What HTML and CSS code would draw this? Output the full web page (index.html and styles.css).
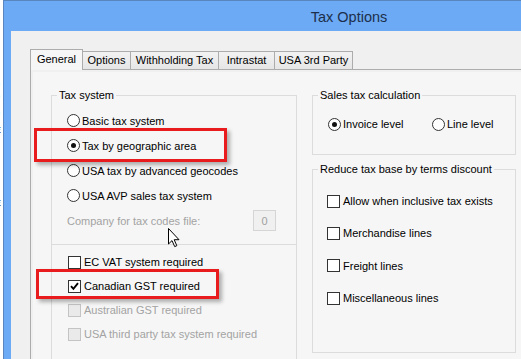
FILE: index.html
```html
<!DOCTYPE html>
<html>
<head>
<meta charset="utf-8">
<link rel="stylesheet" href="styles.css">
</head>
<body>
<div class="screen">
  <div class="behind">
    <span class="frag f1">n</span>
    <span class="frag f2">x</span>
    <span class="frag f3 link">x</span>
    <span class="frag f4">o</span>
    <span class="frag f5">o</span>
    <span class="frag f6">o</span>
    <span class="frag f7">E</span>
    <span class="frag f8">E</span>
  </div>
  <div class="window">
    <div class="titlebar">Tax Options</div>
    <div class="client">
      <div class="tabs">
        <div class="tab tab-general active">General</div>
        <div class="tab tab-options">Options</div>
        <div class="tab tab-withholding">Withholding Tax</div>
        <div class="tab tab-intrastat">Intrastat</div>
        <div class="tab tab-usa">USA 3rd Party</div>
      </div>
      <div class="tabpanel">
        <div class="page">
          <fieldset class="group group-taxsystem">
            <legend>Tax system</legend>
            <div class="section section-radios">
              <div class="opt"><span class="radio"></span>Basic tax system</div>
              <div class="opt"><span class="radio on"></span>Tax by geographic area</div>
              <div class="opt"><span class="radio"></span>USA tax by advanced geocodes</div>
              <div class="opt"><span class="radio"></span>USA AVP sales tax system</div>
              <div class="opt opt-company disabled"><span>Company for tax codes file:</span><span class="numbox">0</span></div>
            </div>
            <div class="section section-checks">
              <div class="opt"><span class="check"></span>EC VAT system required</div>
              <div class="opt"><span class="check on"><svg viewBox="0 0 11 11" width="11" height="11"><path d="M2 5.2 L4.4 7.8 L9 2.2" fill="none" stroke="#000" stroke-width="1.9"/></svg></span>Canadian GST required</div>
              <div class="opt disabled"><span class="check"></span>Australian GST required</div>
              <div class="opt disabled"><span class="check"></span>USA third party tax system required</div>
            </div>
          </fieldset>
          <div class="rightcol">
            <fieldset class="group group-calc">
              <legend>Sales tax calculation</legend>
              <div class="calc-row">
                <div class="opt opt-invoice"><span class="radio on"></span>Invoice level</div>
                <div class="opt"><span class="radio"></span>Line level</div>
              </div>
            </fieldset>
            <fieldset class="group group-reduce">
              <legend>Reduce tax base by terms discount</legend>
              <div class="reduce-list">
                <div class="opt"><span class="check"></span>Allow when inclusive tax exists</div>
                <div class="opt"><span class="check"></span>Merchandise lines</div>
                <div class="opt"><span class="check"></span>Freight lines</div>
                <div class="opt"><span class="check"></span>Miscellaneous lines</div>
              </div>
            </fieldset>
          </div>
        </div>
      </div>
    </div>
  </div>
  <div class="highlight hl-1"></div>
  <div class="highlight hl-2"></div>
  <svg class="cursor" viewBox="0 0 13 21" width="13" height="21"><path d="M1.5 1.5 L1.5 17 L5 13.6 L7.7 19.6 L9.8 18.7 L7.2 12.7 L12 12.7 Z" fill="#fff" stroke="#000" stroke-width="1" stroke-linejoin="miter"/></svg>
</div>
</body>
</html>
```
FILE: styles.css
```css
* { box-sizing: border-box; }
html, body { margin: 0; padding: 0; }
body {
  width: 521px;
  height: 359px;
  overflow: hidden;
  background: #fff;
  font-family: "Liberation Sans", Arial, sans-serif;
  font-size: 11px;
  color: #000;
}
.screen {
  position: relative;
  display: flex;
  width: 521px;
  height: 359px;
  overflow: hidden;
}
.behind {
  flex: none;
  width: 3px;
  background: #fff;
  overflow: hidden;
  display: flex;
  flex-direction: column;
}
.frag {
  display: block;
  height: 9px;
  line-height: 9px;
  margin-left: -5px;
  font-size: 9px;
  color: #222;
}
.frag.link { color: #2a6fd0; }
.f1 { margin-top: 16px; }
.f2 { margin-top: 27px; }
.f3 { margin-top: 9px; }
.f4 { margin-top: 1px; }
.f5 { margin-top: 3px; }
.f6 { margin-top: 8px; }
.f7 { margin-top: 8px; }
.f8 { margin-top: 64px; }

.window {
  flex: none;
  width: 692px;
  height: 420px;
  border: 1px solid #5a86c0;
  background: #6caaf5;
  padding: 0 7px;
  display: flex;
  flex-direction: column;
}
.titlebar {
  flex: none;
  height: 30px;
  margin: 0 -7px;
  text-align: center;
  line-height: 32px;
  font-size: 14.5px;
  color: #1d2f4a;
}
.client {
  flex: 1;
  background: #f0f0f0;
  padding: 18px 0 0 19px;
  display: flex;
  flex-direction: column;
}
.tabs {
  flex: none;
  display: flex;
  align-items: flex-end;
  height: 20px;
  position: relative;
  z-index: 1;
}
.tab {
  height: 18px;
  border: 1px solid #acacac;
  border-bottom: none;
  margin-right: -1px;
  background: linear-gradient(#f2f2f2, #e6e6e6);
  line-height: 17px;
  text-align: center;
  white-space: nowrap;
}
.tab.active {
  height: 21px;
  margin-bottom: -1px;
  background: #f6f6f6;
  line-height: 19px;
  position: relative;
  z-index: 2;
}
.tab-general { width: 53px; }
.tab-options { width: 49px; }
.tab-withholding { width: 89px; }
.tab-intrastat { width: 57px; }
.tab-usa { width: 79px; }

.tabpanel {
  flex: 1;
  border: 1px solid #acacac;
  background: #f0f0f0;
  padding: 2px;
  display: flex;
  flex-direction: column;
}
.page {
  flex: 1;
  background: #f6f6f6;
  padding: 16px 0 0 18px;
  display: grid;
  grid-template-columns: 246px 204px;
  column-gap: 15px;
  align-items: start;
}
.group {
  margin: 0;
  padding: 0;
  min-width: 0;
  border: 1px solid #dcdcdc;
}
.group legend {
  margin-left: 5px;
  padding: 0 2px;
  line-height: 14px;
}
.opt {
  display: flex;
  align-items: center;
  white-space: nowrap;
}
.disabled { color: #a3a3a3; }

.section-radios {
  padding: 6px 0 11px 15px;
}
.section-radios .opt { height: 25px; }
.opt-company { padding-right: 20px; justify-content: space-between; }
.numbox {
  width: 23px;
  height: 21px;
  border: 1px solid #d5d5d5;
  background: #f0f0f0;
  display: flex;
  align-items: center;
  justify-content: center;
  color: #a0a0a0;
}
.section-checks {
  border-top: 1px solid #dcdcdc;
  padding: 5px 0 40px 16px;
}
.section-checks .opt { height: 24px; }

.radio {
  flex: none;
  width: 13px;
  height: 13px;
  border: 1px solid #333;
  border-radius: 50%;
  background: #fff;
  margin-right: 2px;
  display: flex;
  align-items: center;
  justify-content: center;
}
.radio.on::after {
  content: "";
  width: 5px;
  height: 5px;
  border-radius: 50%;
  background: #111;
}
.check {
  flex: none;
  width: 13px;
  height: 13px;
  border: 1px solid #333;
  background: #fff;
  margin-right: 3px;
  display: flex;
  align-items: center;
  justify-content: center;
}
.disabled .check {
  border-color: #c4c4c4;
  background: #eaeaea;
}

.rightcol {
  display: flex;
  flex-direction: column;
  gap: 7px;
}
.calc-row {
  display: flex;
  height: 20px;
  margin: 12px 0 20px 15px;
}
.opt-invoice { width: 104px; }
.reduce-list {
  padding: 9px 0 38px 14px;
}
.reduce-list .opt { height: 32.3px; }

.highlight {
  position: absolute;
  border: 3px solid #e81c1c;
  box-shadow: 3px 3px 4px rgba(0, 0, 0, 0.3);
}
.hl-1 { left: 34px; top: 128px; width: 193px; height: 34px; }
.hl-2 { left: 36px; top: 269px; width: 183px; height: 30px; }
.cursor {
  position: absolute;
  left: 167px;
  top: 227px;
}
```
